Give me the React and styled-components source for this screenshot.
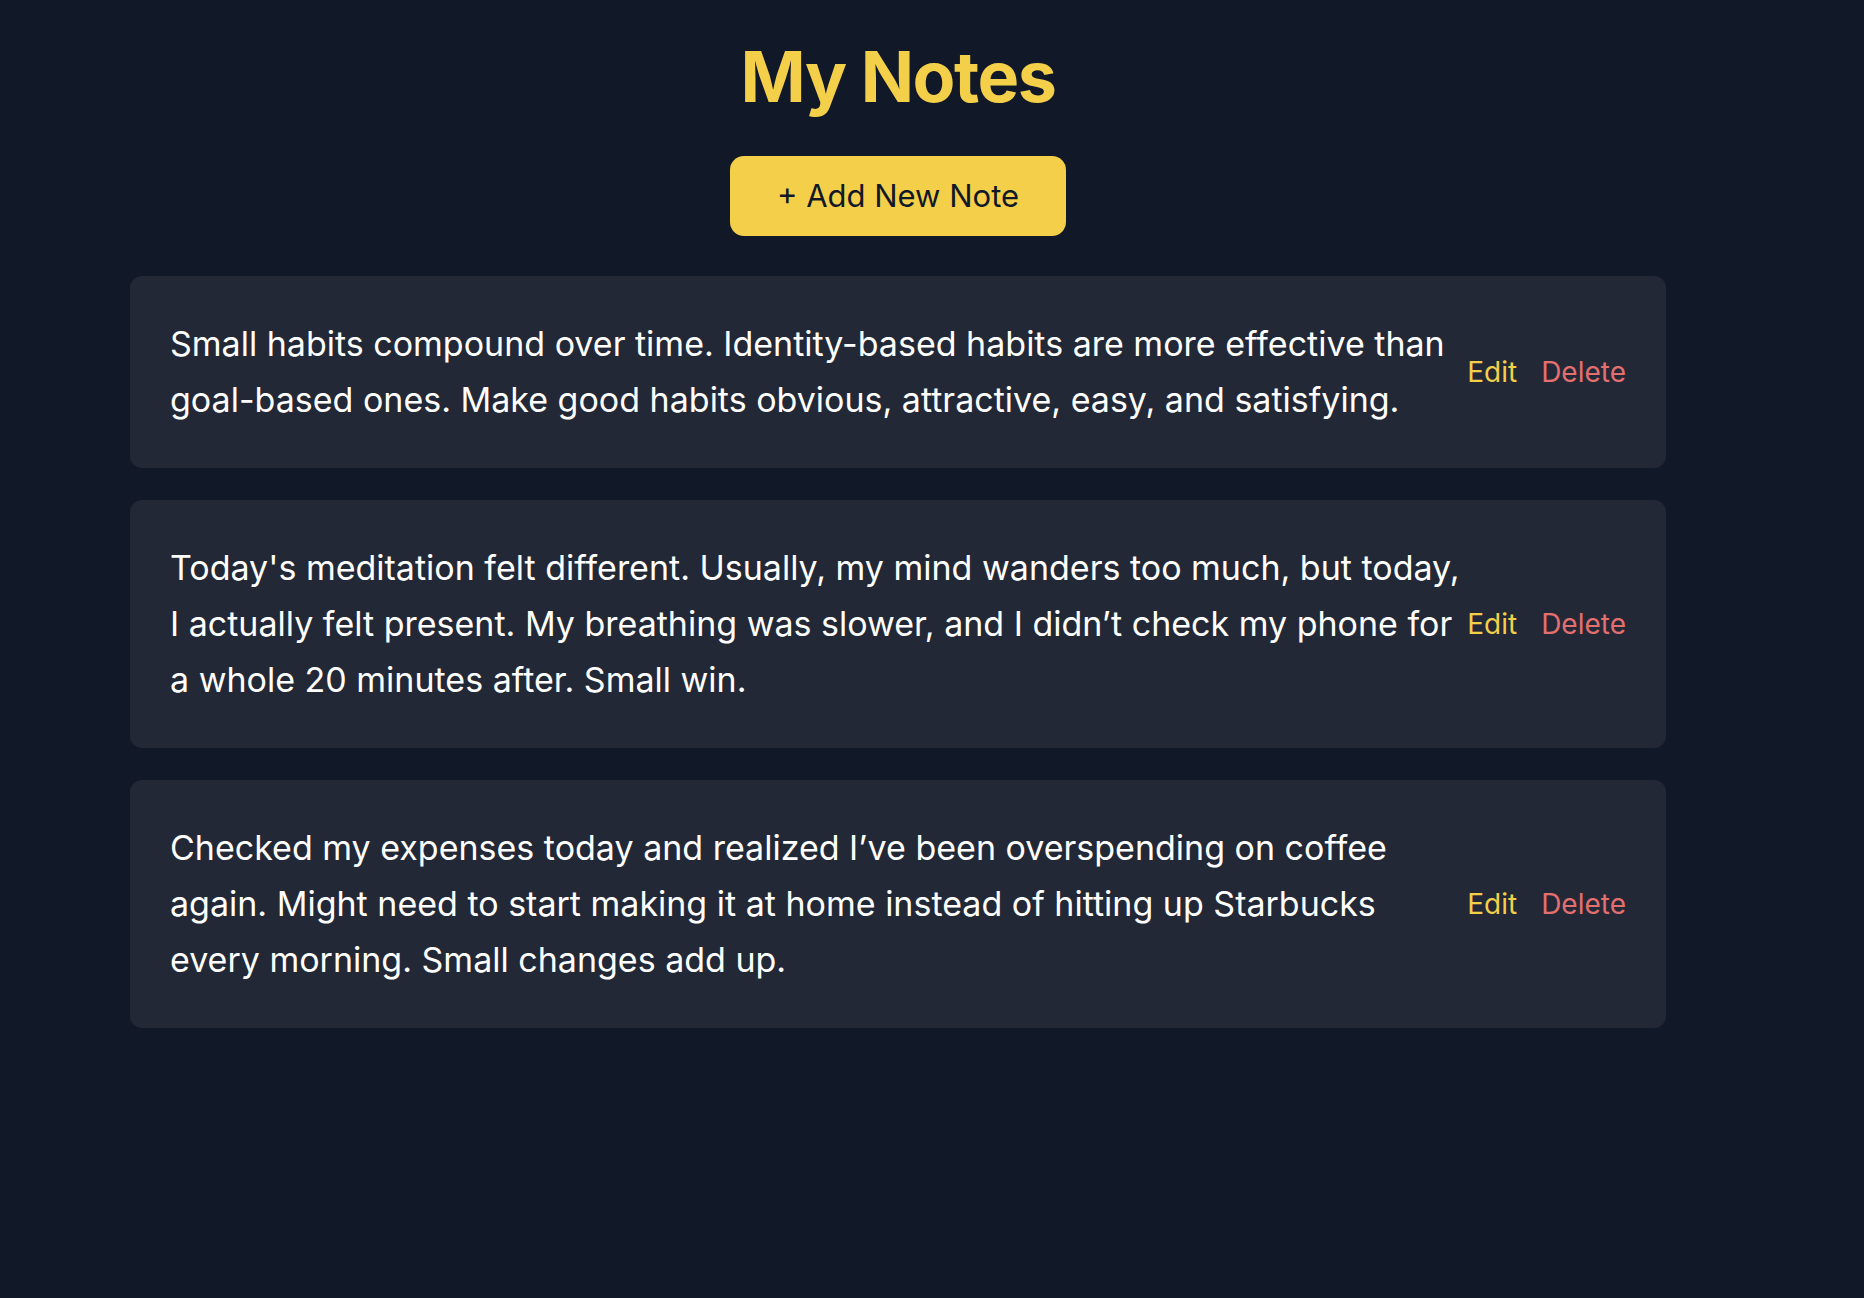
import React from "react";
import styled, { createGlobalStyle } from "styled-components";

const notes = [
  "Small habits compound over time. Identity-based habits are more effective than goal-based ones. Make good habits obvious, attractive, easy, and satisfying.",
  "Today's meditation felt different. Usually, my mind wanders too much, but today, I actually felt present. My breathing was slower, and I didn’t check my phone for a whole 20 minutes after. Small win.",
  "Checked my expenses today and realized I’ve been overspending on coffee again. Might need to start making it at home instead of hitting up Starbucks every morning. Small changes add up.",
];

function NoteCard({ text }) {
  return (
    <Card>
      <NoteText>{text}</NoteText>
      <Actions>
        <ActionButton tone="edit">Edit</ActionButton>
        <ActionButton tone="delete">Delete</ActionButton>
      </Actions>
    </Card>
  );
}

export default function App() {
  return (
    <>
      <GlobalStyle />
      <Page>
        <Title>My Notes</Title>
        <AddButton>+ Add New Note</AddButton>
        <NoteList>
          {notes.map((n, i) => (
            <NoteCard key={i} text={n} />
          ))}
        </NoteList>
      </Page>
    </>
  );
}

const GlobalStyle = createGlobalStyle`
  html, body {
    margin: 0;
    padding: 0;
    background: #111827;
    font-family: Inter, "Noto Sans", sans-serif;
  }
`;

const Page = styled.div`
  display: flex;
  flex-direction: column;
  align-items: center;
  padding: 37px 68px 40px 0;
  min-height: 1298px;
  box-sizing: border-box;
  background: #111827;
`;

const Title = styled.h1`
  margin: 0;
  font-size: 70px;
  line-height: 80px;
  font-weight: 700;
  letter-spacing: -1.5px;
  color: #f4cf4a;
`;

const AddButton = styled.button`
  margin-top: 39px;
  padding: 16px 47px;
  border: none;
  border-radius: 14px;
  background: #f4cf4a;
  color: #111827;
  font-family: Inter, sans-serif;
  font-size: 31px;
  line-height: 48px;
  cursor: pointer;
`;

const NoteList = styled.div`
  margin-top: 40px;
  width: 1536px;
  display: flex;
  flex-direction: column;
  gap: 32px;
`;

const Card = styled.div`
  display: flex;
  align-items: center;
  justify-content: space-between;
  padding: 40px;
  border-radius: 12px;
  background: #222836;
`;

const NoteText = styled.p`
  flex: 1;
  margin: 0;
  color: #ffffff;
  font-size: 34px;
  line-height: 56px;
`;

const Actions = styled.div`
  display: flex;
  gap: 24px;
  margin-left: 4px;
`;

const ActionButton = styled.button`
  padding: 0;
  border: none;
  background: none;
  font-family: Inter, sans-serif;
  font-size: 28px;
  line-height: 40px;
  cursor: pointer;
  color: ${(p) => (p.tone === "delete" ? "#e46f6f" : "#f4cf4a")};
`;
